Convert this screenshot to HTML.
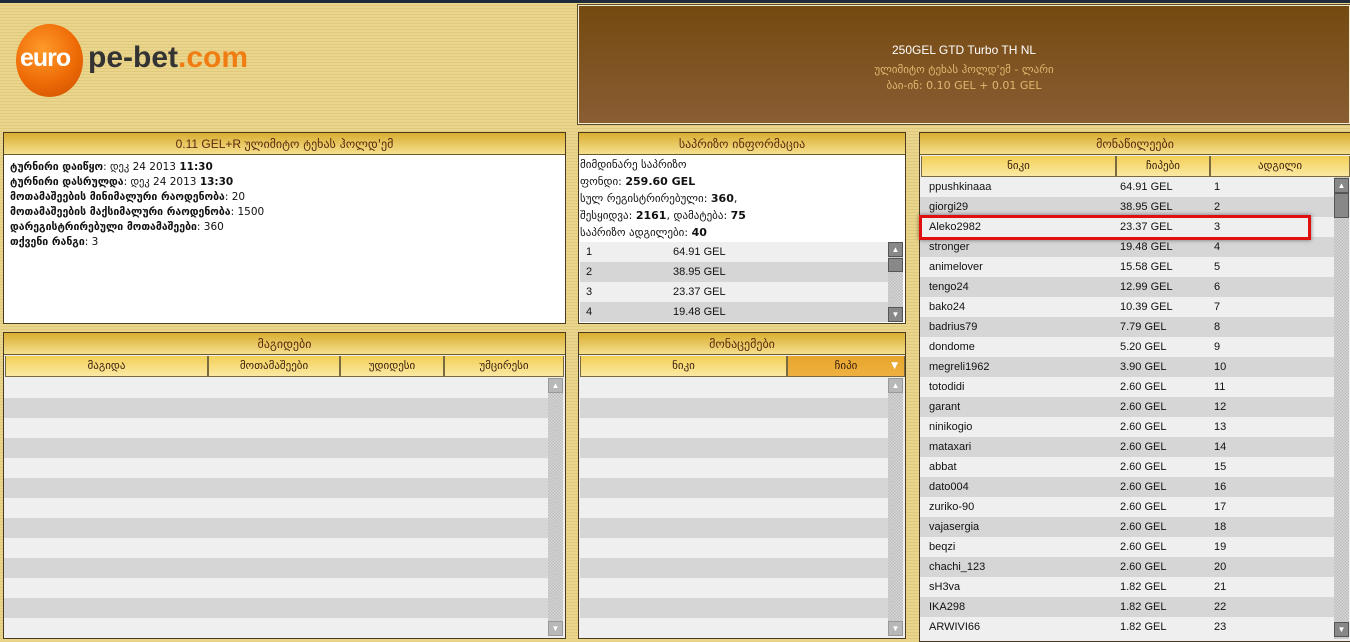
<!DOCTYPE html>
<html><head><meta charset="utf-8">
<style>
*{margin:0;padding:0;box-sizing:border-box}
body{width:1350px;height:641px;overflow:hidden;position:relative;background:#e6d083;font-family:"Liberation Sans","DejaVu Sans",sans-serif;font-size:12px;color:#111}
.bg{position:absolute;inset:0;background:repeating-linear-gradient(180deg,#ead58c 0,#ead58c 2px,#e0c97c 2px,#e0c97c 3px)}
.topline{position:absolute;left:0;top:0;width:1350px;height:3px;background:#1f2a3a}
.abs{position:absolute}
.panel{position:absolute;border:1px solid #4a3a20;background:#fff}
.ph{height:22px;background:linear-gradient(#d9ae30,#f5df8e);border-bottom:1px solid #6d5a2a;text-align:center;line-height:22px;color:#5a2a10;font-size:12px;font-family:"DejaVu Sans",sans-serif}
.ch{position:absolute;height:21px;background:linear-gradient(#f3cf55,#fbe9a4);border:1px solid #7a6a40;border-top:none;text-align:center;line-height:20px;color:#3a2010;font-size:11px;font-family:"DejaVu Sans",sans-serif}
.row{position:absolute;height:20px;line-height:20px;font-size:11px;color:#111}
.r0{background:#efefef}.r1{background:#d6d6d6}
.sb{position:absolute;width:15px;background:repeating-conic-gradient(#bdbdbd 0 25%,#d8d8d8 0 50%) 0 0/3px 3px}
.sbb{position:absolute;width:15px;height:15px;background:#888;border:1px solid #555;color:#fff;font-size:8px;text-align:center;line-height:13px}
.geo{font-family:"DejaVu Sans",sans-serif}
</style></head><body>
<div class="bg"></div>
<div class="topline"></div>

<!-- logo -->
<div class="abs" style="left:16px;top:24px;width:67px;height:73px;border-radius:50%;background:radial-gradient(circle at 40% 35%,#ff9a2a,#ee6a06 55%,#c84c00)"></div>
<div class="abs" style="left:20px;top:44px;font-size:25px;font-weight:bold;color:#fff;letter-spacing:-1px">euro</div>
<div class="abs" style="left:88px;top:41px;font-size:30px;font-weight:bold;color:#333;letter-spacing:0px">pe-bet<span style="color:#f07d12">.com</span></div>

<!-- banner -->
<div class="abs" style="left:578px;top:5px;width:772px;height:119px;border:1px solid #f3ecd0;outline:1px solid #5c4b2c;background:linear-gradient(#744a10,#8a5d33)"></div>
<div class="abs" style="left:578px;top:43px;width:772px;text-align:center;color:#fff;font-size:12px">250GEL GTD Turbo TH NL</div>
<div class="abs geo" style="left:578px;top:63px;width:772px;text-align:center;color:#e0b870;font-size:11px">ულიმიტო ტეხას ჰოლდ'ემ - ლარი</div>
<div class="abs geo" style="left:578px;top:79px;width:772px;text-align:center;color:#e0b870;font-size:11px">ბაი-ინ: 0.10 GEL + 0.01 GEL</div>

<!-- panel 1 -->
<div class="panel" style="left:3px;top:132px;width:563px;height:192px">
<div class="ph" style="font-family:'Liberation Sans','DejaVu Sans',sans-serif">0.11 GEL+R <span class="geo">ულიმიტო ტეხას ჰოლდ'ემ</span></div>
<div class="geo" style="padding:5px 6px;font-size:10.5px;line-height:15px">
<div><b>ტურნირი დაიწყო</b>: დეკ 24 2013 <b>11:30</b></div>
<div><b>ტურნირი დასრულდა</b>: დეკ 24 2013 <b>13:30</b></div>
<div><b>მოთამაშეების მინიმალური რაოდენობა</b>: 20</div>
<div><b>მოთამაშეების მაქსიმალური რაოდენობა</b>: 1500</div>
<div><b>დარეგისტრირებული მოთამაშეები</b>: 360</div>
<div><b>თქვენი რანგი</b>: 3</div>
</div>
</div>

<!-- panel 2 -->
<div class="panel" style="left:578px;top:132px;width:328px;height:192px">
<div class="ph">საპრიზო ინფორმაცია</div>
<div class="geo" style="padding:1px 1px;font-size:11px;line-height:17px">
<div>მიმდინარე საპრიზო</div>
<div>ფონდი: <b>259.60 GEL</b></div>
<div>სულ რეგისტრირებული: <b>360</b>,</div>
<div>შესყიდვა: <b>2161</b>, დამატება: <b>75</b></div>
<div>საპრიზო ადგილები: <b>40</b></div>
</div>
</div>
<div class="row r0" style="left:580px;top:242px;width:308px"><span style="position:absolute;left:6px">1</span><span style="position:absolute;left:93px">64.91 GEL</span></div>
<div class="row r1" style="left:580px;top:262px;width:308px"><span style="position:absolute;left:6px">2</span><span style="position:absolute;left:93px">38.95 GEL</span></div>
<div class="row r0" style="left:580px;top:282px;width:308px"><span style="position:absolute;left:6px">3</span><span style="position:absolute;left:93px">23.37 GEL</span></div>
<div class="row r1" style="left:580px;top:302px;width:308px"><span style="position:absolute;left:6px">4</span><span style="position:absolute;left:93px">19.48 GEL</span></div>
<div class="sb" style="left:888px;top:242px;height:80px"></div>
<div class="sbb" style="left:888px;top:242px">▲</div>
<div class="sbb" style="left:888px;top:258px;height:14px"></div>
<div class="sbb" style="left:888px;top:307px">▼</div>

<!-- panel 4 -->
<div class="panel" style="left:3px;top:332px;width:563px;height:307px;background:#efefef">
<div class="ph">მაგიდები</div>
</div>
<div class="ch" style="left:5px;top:356px;width:203px">მაგიდა</div>
<div class="ch" style="left:208px;top:356px;width:132px">მოთამაშეები</div>
<div class="ch" style="left:340px;top:356px;width:104px">უდიდესი</div>
<div class="ch" style="left:444px;top:356px;width:120px">უმცირესი</div>
<div id="tl"></div>
<div class="sb" style="left:548px;top:378px;height:258px"></div>
<div class="sbb" style="left:548px;top:378px;background:#b8b8b8;border-color:#999">▲</div>
<div class="sbb" style="left:548px;top:621px;background:#b8b8b8;border-color:#999">▼</div>

<!-- panel 5 -->
<div class="panel" style="left:578px;top:332px;width:328px;height:307px;background:#efefef">
<div class="ph">მონაცემები</div>
</div>
<div class="ch" style="left:580px;top:356px;width:207px">ნიკი</div>
<div class="ch" style="left:787px;top:356px;width:118px;background:linear-gradient(#e6a62c,#eeb040)">ჩიპი<span style="position:absolute;right:6px;top:0;color:#fff;font-size:9px">▼</span></div>
<div id="tm"></div>
<div class="sb" style="left:888px;top:378px;height:258px"></div>
<div class="sbb" style="left:888px;top:378px;background:#b8b8b8;border-color:#999">▲</div>
<div class="sbb" style="left:888px;top:621px;background:#b8b8b8;border-color:#999">▼</div>

<!-- panel 3 -->
<div class="panel" style="left:919px;top:132px;width:432px;height:510px;background:#efefef">
<div class="ph">მონაწილეები</div>
</div>
<div class="ch" style="left:921px;top:156px;width:195px">ნიკი</div>
<div class="ch" style="left:1116px;top:156px;width:94px">ჩიპები</div>
<div class="ch" style="left:1210px;top:156px;width:140px">ადგილი</div>
<div id="tr"></div>
<div class="sb" style="left:1334px;top:177px;height:462px"></div>
<div class="sbb" style="left:1334px;top:178px">▲</div>
<div class="sbb" style="left:1334px;top:193px;height:25px"></div>
<div class="sbb" style="left:1334px;top:622px">▼</div>
<div class="abs" style="left:919px;top:215px;width:392px;height:25px;border:3px solid #e01010;box-shadow:0 0 4px rgba(0,0,0,.5)"></div>

<script>
var L='',M='';
for(var i=0;i<13;i++){var c=i%2?'r1':'r0';L+='<div class="row '+c+'" style="left:4px;top:'+(378+i*20)+'px;width:544px"></div>';M+='<div class="row '+c+'" style="left:580px;top:'+(378+i*20)+'px;width:308px"></div>';}
document.getElementById('tl').outerHTML=L;document.getElementById('tm').outerHTML=M;
var d=[["ppushkinaaa","64.91"],["giorgi29","38.95"],["Aleko2982","23.37"],["stronger","19.48"],["animelover","15.58"],["tengo24","12.99"],["bako24","10.39"],["badrius79","7.79"],["dondome","5.20"],["megreli1962","3.90"],["totodidi","2.60"],["garant","2.60"],["ninikogio","2.60"],["mataxari","2.60"],["abbat","2.60"],["dato004","2.60"],["zuriko-90","2.60"],["vajasergia","2.60"],["beqzi","2.60"],["chachi_123","2.60"],["sH3va","1.82"],["IKA298","1.82"],["ARWIVI66","1.82"]];
var R='';
for(var i=0;i<d.length;i++){R+='<div class="row '+(i%2?'r1':'r0')+'" style="left:920px;top:'+(177+i*20)+'px;width:414px"><span style="position:absolute;left:9px">'+d[i][0]+'</span><span style="position:absolute;left:200px">'+d[i][1]+' GEL</span><span style="position:absolute;left:294px">'+(i+1)+'</span></div>';}
document.getElementById('tr').outerHTML=R;
</script>
</body></html>
